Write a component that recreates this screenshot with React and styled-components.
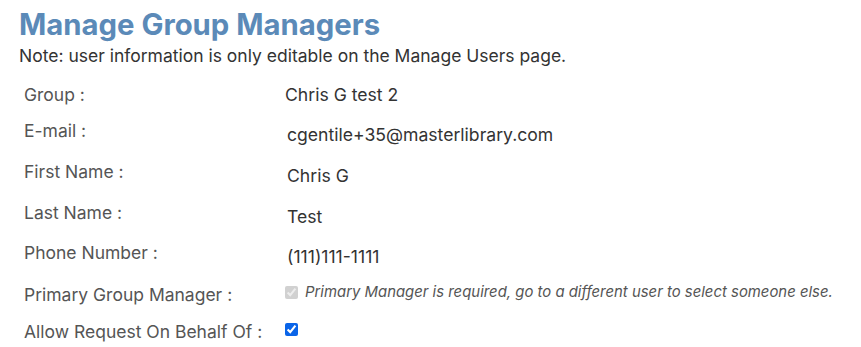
import React from 'react';
import styled, { createGlobalStyle } from 'styled-components';

const GlobalStyle = createGlobalStyle`
  body {
    margin: 0;
    background: #ffffff;
    font-family: Inter, "Noto Sans", sans-serif;
    color: #333333;
  }
`;

const Page = styled.div`
  padding: 7px 0 0 19px;
`;

const Title = styled.h1`
  margin: 0;
  font-size: 29.3px;
  line-height: 36px;
  font-weight: 700;
  color: #5b8ab8;
`;

const Note = styled.p`
  margin: 2px 0 0;
  font-size: 17.5px;
  line-height: 21px;
  color: #333333;
`;

const Form = styled.div`
  display: flex;
  flex-direction: column;
  padding: 10px 0 0 5px;
`;

const Row = styled.div`
  display: grid;
  grid-template-columns: 261px 1fr;
  align-items: start;
  height: ${p => p.$h}px;
  padding-top: 8px;
  box-sizing: border-box;
`;

const Label = styled.div`
  font-size: 17.5px;
  line-height: 21px;
  color: #555555;
  padding-top: ${p => p.$offset || 0}px;
`;

const Value = styled.div`
  display: flex;
  align-items: center;
  gap: 7px;
  min-height: 21px;
  font-size: 17.6px;
  line-height: 21px;
  color: #333333;
  padding-top: ${p => p.$offset || 0}px;
  padding-left: ${p => p.$indent || 0}px;
`;

const Check = styled.input`
  width: 13px;
  height: 13px;
  margin: 0;
  accent-color: #0a64e8;
`;

const Hint = styled.span`
  font-size: 14.9px;
  font-style: italic;
  color: #555555;
`;

export default function App() {
  return (
    <Page>
      <GlobalStyle />
      <Title>Manage Group Managers</Title>
      <Note>Note: user information is only editable on the Manage Users page.</Note>
      <Form>
        <Row $h={36}>
          <Label>Group :</Label>
          <Value>Chris G test 2</Value>
        </Row>
        <Row $h={41}>
          <Label>E-mail :</Label>
          <Value $offset={4} $indent={2}>cgentile+35@masterlibrary.com</Value>
        </Row>
        <Row $h={41}>
          <Label>First Name :</Label>
          <Value $offset={4} $indent={2}>Chris G</Value>
        </Row>
        <Row $h={40}>
          <Label>Last Name :</Label>
          <Value $offset={4} $indent={2}>Test</Value>
        </Row>
        <Row $h={40}>
          <Label>Phone Number :</Label>
          <Value $offset={4} $indent={2}>(111)111-1111</Value>
        </Row>
        <Row $h={37}>
          <Label $offset={2}>Primary Group Manager :</Label>
          <Value>
            <Check type="checkbox" checked disabled readOnly />
            <Hint>Primary Manager is required, go to a different user to select someone else.</Hint>
          </Value>
        </Row>
        <Row $h={36}>
          <Label $offset={2}>Allow Request On Behalf Of :</Label>
          <Value>
            <Check type="checkbox" defaultChecked />
          </Value>
        </Row>
      </Form>
    </Page>
  );
}
